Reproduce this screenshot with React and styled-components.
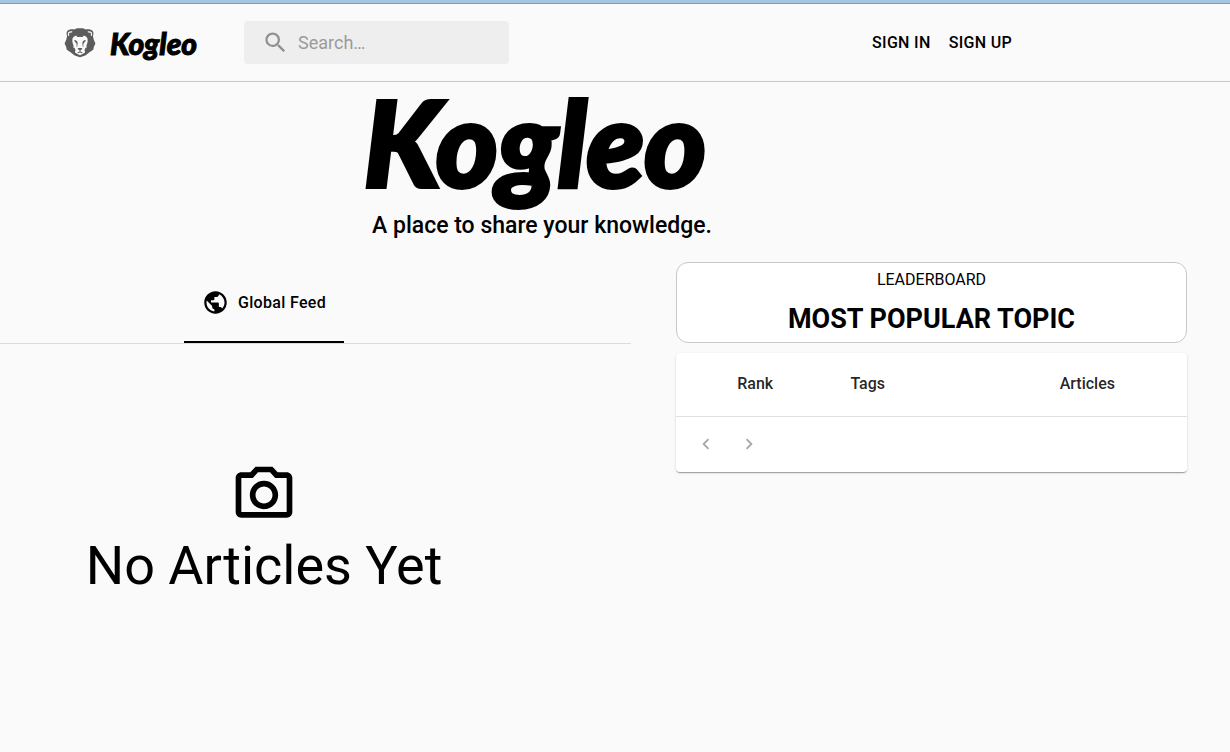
import React from "react";
import styled, { createGlobalStyle } from "styled-components";
import {
  MdSearch,
  MdPublic,
  MdOutlinePhotoCamera,
  MdChevronLeft,
  MdChevronRight,
} from "react-icons/md";

const GlobalStyle = createGlobalStyle`
  * { box-sizing: border-box; }
  body {
    margin: 0;
    background: #fafafa;
    color: #000;
    font-family: Roboto, "Liberation Sans", sans-serif;
    font-size: 16px;
    line-height: 24px;
  }
`;

const TopStrip = styled.div`
  height: 4px;
  background: #a3c7df;
  border-bottom: 1px solid #7d9bad;
`;

const Header = styled.header`
  display: flex;
  align-items: center;
  height: 78px;
  padding: 0 218px 0 64px;
  border-bottom: 1px solid #c8c8c8;
`;

const Brand = styled.a`
  display: flex;
  align-items: center;
  gap: 14px;
  width: 180px;
  color: #000;
  text-decoration: none;
`;

const Wordmark = styled.span`
  display: block;
  font-family: Lato, "Open Sans", sans-serif;
  font-weight: 900;
  font-style: italic;
  font-size: ${(p) => p.$size}px;
  line-height: ${(p) => p.$line}px;
  -webkit-text-stroke: ${(p) => p.$stroke}px #000;
  stroke-linejoin: round;
`;

const SearchBox = styled.label`
  display: flex;
  align-items: center;
  gap: 9px;
  width: 265px;
  height: 43px;
  padding: 0 18px;
  border-radius: 4px;
  background: #eee;
  color: #8f8f8f;
`;

const SearchInput = styled.input`
  flex: 1;
  min-width: 0;
  padding: 0;
  border: 0;
  outline: 0;
  background: transparent;
  color: #000;
  font: inherit;
  font-size: 18px;
  &::placeholder {
    color: #9b9b9b;
    opacity: 1;
  }
`;

const Nav = styled.nav`
  display: flex;
  gap: 18px;
  margin-left: auto;
`;

const NavLink = styled.a`
  color: #000;
  font-weight: 500;
  letter-spacing: 0.02em;
  text-decoration: none;
`;

const Hero = styled.section`
  display: flex;
  flex-direction: column;
  align-items: center;
  padding: 4px 146px 0 0;
`;

const HeroTitle = styled.h1`
  margin: 0;
  padding-right: 14px;
  font-size: inherit;
`;

const Tagline = styled.p`
  margin: 12px 0 0;
  font-size: 23px;
  font-weight: 500;
  line-height: 32px;
`;

const Columns = styled.main`
  display: grid;
  grid-template-columns: 631fr 511fr;
  gap: 45px;
  padding: 20px 43px 0 0;
`;

const TabList = styled.div`
  display: flex;
  justify-content: center;
  padding-right: 103px;
  border-bottom: 1px solid #dcdcdc;
`;

const Tab = styled.button`
  display: flex;
  align-items: center;
  justify-content: center;
  gap: 9px;
  width: 160px;
  height: 81px;
  padding: 2px 0 0;
  border: 0;
  border-bottom: 2px solid #000;
  background: transparent;
  color: #000;
  font: inherit;
  font-weight: 500;
  letter-spacing: 0.02em;
`;

const EmptyFeed = styled.div`
  display: flex;
  flex-direction: column;
  align-items: center;
  gap: 1px;
  padding: 117px 103px 0 0;
`;

const EmptyText = styled.h2`
  margin: 0;
  font-size: 54px;
  font-weight: 400;
  line-height: 72px;
`;

const BoardTitle = styled.section`
  height: 81px;
  padding-top: 5px;
  border: 1px solid #c8c8c8;
  border-radius: 12px;
  background: #fff;
  text-align: center;
`;

const Overline = styled.p`
  margin: 0;
`;

const BoardHeading = styled.h2`
  margin: 7px 0 0;
  font-size: 27px;
  font-weight: 700;
  line-height: 40px;
`;

const BoardCard = styled.section`
  margin-top: 10px;
  border-radius: 4px;
  background: #fff;
  box-shadow: 0 2px 1px -1px rgba(0, 0, 0, 0.2), 0 1px 1px rgba(0, 0, 0, 0.14),
    0 1px 3px rgba(0, 0, 0, 0.12);
`;

const Table = styled.table`
  width: 100%;
  border-collapse: collapse;
  table-layout: fixed;
`;

const HeadCell = styled.th`
  width: ${(p) => p.$width};
  height: 63px;
  padding: ${(p) => (p.$align === "left" ? "0 16px" : "0")};
  border-bottom: 1px solid #e0e0e0;
  color: rgba(0, 0, 0, 0.87);
  font-weight: 500;
  text-align: ${(p) => p.$align || "center"};
`;

const Pager = styled.div`
  display: flex;
  gap: 3px;
  padding: 7px 10px 8px;
`;

const PageButton = styled.button`
  display: flex;
  align-items: center;
  justify-content: center;
  width: 40px;
  height: 40px;
  padding: 0;
  border: 0;
  background: transparent;
  color: #a6a6a6;
`;

function LionIcon() {
  return (
    <svg width="32" height="32" viewBox="0 0 32 32" aria-hidden="true">
      <path
        fill="#5c5c5c"
        d="M10.2 2.5 13 1.3h6l2.8 1.2c2.3-.5 5.6-.1 6.9 1.4 1.1 1.5.9 3.5.2 5.1l.8 3.4 1.7 4-1.5 3.3-.7 3-3.7 2.6-4.2 3.3L16 30.3l-5.3-1.7-4.2-3.3-3.7-2.6-.7-3L.6 16.4l1.7-4 .8-3.4c-.7-1.6-.9-3.6.2-5.1 1.3-1.5 4.6-1.9 6.9-1.4Z"
      />
      <path
        fill="none"
        stroke="#fafafa"
        strokeWidth="1.3"
        strokeLinecap="round"
        d="M4.6 8.3C3.9 5.9 4.9 4.6 7.7 4.8M27.4 8.3c.7-2.4-.3-3.7-3.1-3.5"
      />
      <path
        fill="#fafafa"
        d="M12.2 8.4C9.7 9 8.3 10.8 8.3 13.2c0 2 .6 3.4 1.1 4.9l.1 2.5 1.2 2.2.5 3 4.8 2.4 4.8-2.4.5-3 1.2-2.2.1-2.5c.5-1.5 1.1-2.9 1.1-4.9 0-2.4-1.4-4.2-3.9-4.8-.7 1.5-2 2.1-3.8 1.4-1.8.7-3.1.1-3.8-1.4Z"
      />
      <path
        fill="#5c5c5c"
        d="M10 13.5c1.4-.5 2.6 0 3.3 1.3l.4 1.8-.6 3.4-.5-.2.1-2.9-1.3-1.7ZM22 13.5c-1.4-.5-2.6 0-3.3 1.3l-.4 1.8.6 3.4.5-.2-.1-2.9 1.3-1.7ZM13.7 21h4.6l-.4 1.2-1.5 1.2v1.2l2.2.9-.5.7-2.1-.7-2.1.7-.5-.7 2.2-.9v-1.2l-1.5-1.2ZM9.8 20.3l1.4 1.8.2 2.5-1.3-.8ZM22.2 20.3l-1.4 1.8-.2 2.5 1.3-.8Z"
      />
    </svg>
  );
}

export default function App() {
  return (
    <>
      <GlobalStyle />
      <TopStrip />
      <Header>
        <Brand href="#">
          <LionIcon />
          <Wordmark $size={30} $line={40} $stroke={1}>Kogleo</Wordmark>
        </Brand>
        <SearchBox>
          <MdSearch size={27} aria-hidden="true" />
          <SearchInput type="search" placeholder="Search…" aria-label="Search" />
        </SearchBox>
        <Nav>
          <NavLink href="#">SIGN IN</NavLink>
          <NavLink href="#">SIGN UP</NavLink>
        </Nav>
      </Header>
      <Hero>
        <HeroTitle>
          <Wordmark $size={118} $line={112} $stroke={4}>Kogleo</Wordmark>
        </HeroTitle>
        <Tagline>A place to share your knowledge.</Tagline>
      </Hero>
      <Columns>
        <section>
          <TabList role="tablist">
            <Tab type="button" role="tab" aria-selected="true">
              <MdPublic size={27} aria-hidden="true" />
              Global Feed
            </Tab>
          </TabList>
          <EmptyFeed>
            <MdOutlinePhotoCamera size={68} aria-hidden="true" />
            <EmptyText>No Articles Yet</EmptyText>
          </EmptyFeed>
        </section>
        <aside>
          <BoardTitle>
            <Overline>LEADERBOARD</Overline>
            <BoardHeading>MOST POPULAR TOPIC</BoardHeading>
          </BoardTitle>
          <BoardCard>
            <Table>
              <thead>
                <tr>
                  <HeadCell $width="31%">Rank</HeadCell>
                  <HeadCell $width="30%" $align="left">Tags</HeadCell>
                  <HeadCell $width="39%">Articles</HeadCell>
                </tr>
              </thead>
            </Table>
            <Pager>
              <PageButton type="button" aria-label="Previous page">
                <MdChevronLeft size={22} />
              </PageButton>
              <PageButton type="button" aria-label="Next page">
                <MdChevronRight size={22} />
              </PageButton>
            </Pager>
          </BoardCard>
        </aside>
      </Columns>
    </>
  );
}
